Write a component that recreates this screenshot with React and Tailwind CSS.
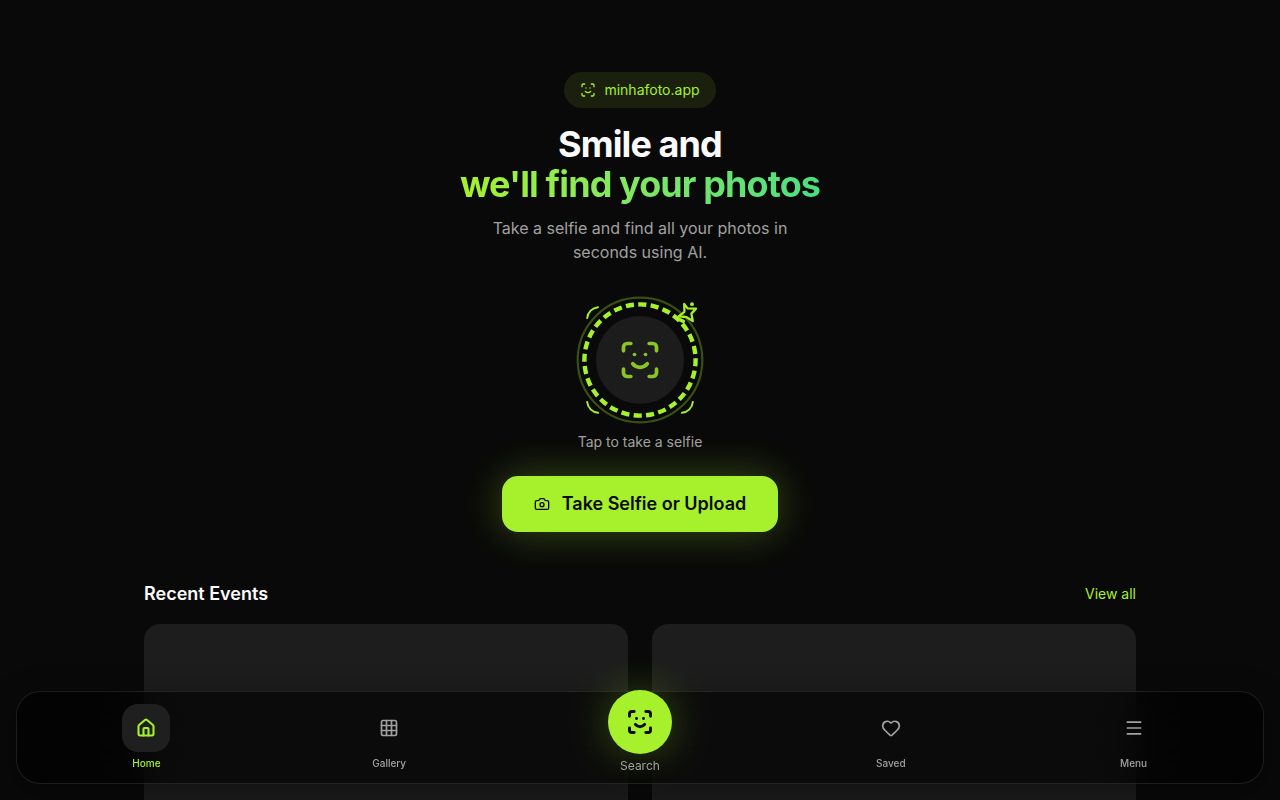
import React from "react";
import { Camera, Grid3x3, Heart, House, Menu, ScanFace } from "lucide-react";

const navItems = [
  { label: "Home", icon: House, active: true },
  { label: "Gallery", icon: Grid3x3 },
  { label: "Search", icon: ScanFace, main: true },
  { label: "Saved", icon: Heart },
  { label: "Menu", icon: Menu },
];

const events = [1, 2];

const SelfieButton = () => (
  <button
    type="button"
    aria-label="Take a selfie"
    className="relative flex size-32 items-center justify-center"
  >
    <svg
      viewBox="0 0 128 128"
      fill="none"
      stroke="#a6f02c"
      className="absolute inset-0 size-full"
    >
      <circle cx="64" cy="64" r="62.3" strokeWidth="2.2" strokeOpacity="0.3" />
      <circle
        cx="64"
        cy="64"
        r="55.6"
        strokeWidth="4.4"
        pathLength="336"
        strokeDasharray="7.8 4.2"
        transform="rotate(-91.8 64 64)"
      />
      <g strokeWidth="2" strokeLinecap="round" strokeLinejoin="round">
        <path d="M11.2 22A12 12 0 0 1 22 11.2" />
        <path d="M11.2 106A12 12 0 0 0 22 116.8" />
        <path d="M116.8 106A12 12 0 0 1 106 116.8" />
        {/* sparkle */}
        <path
          d="M108.2 8L111.6 12.4L120 12.6L115.4 17.6L116.8 25L110.6 21.2L102.6 20.4L108.4 15.8Z"
          strokeWidth="2.3"
        />
        <path d="M101.4 22.6L107.4 25.4" strokeWidth="3.4" />
      </g>
      <circle cx="116" cy="8.2" r="1.9" fill="#a6f02c" stroke="none" />
    </svg>
    <span className="flex size-22 items-center justify-center rounded-full bg-[#1c1c1c]">
      <ScanFace className="size-11 text-[#a6f02c] opacity-80" />
    </span>
  </button>
);

const Hero = () => (
  <section className="flex flex-col items-center px-4 pt-18 text-center">
    <div className="flex items-center gap-2 rounded-full bg-[#1a200d] px-4 py-2 text-sm text-[#a6f02c]">
      <ScanFace className="size-4" />
      <span>minhafoto.app</span>
    </div>
    <h1 className="mt-4 text-4xl font-bold tracking-tight text-[#fafafa]">
      Smile and
      <span className="block bg-linear-to-r from-[#a6f02c] to-[#4ade80] bg-clip-text text-transparent">
        we'll find your photos
      </span>
    </h1>
    <p className="mt-3 max-w-xs text-base text-[#a1a1a1]">
      Take a selfie and find all your photos in seconds using AI.
    </p>
    <div className="mt-8">
      <SelfieButton />
    </div>
    <p className="mt-2 text-sm text-[#a1a1a1]">Tap to take a selfie</p>
    <button
      type="button"
      className="mt-6 flex h-14 items-center gap-3 rounded-2xl bg-[#a6f02c] px-8 text-lg font-semibold text-[#0a0a0a] shadow-[0_0_40px_rgba(166,240,44,0.3)]"
    >
      <Camera className="size-4" />
      Take Selfie or Upload
    </button>
  </section>
);

const RecentEvents = () => (
  <section className="mx-auto mt-12 max-w-5xl px-4 pb-32">
    <div className="mb-4 flex items-center justify-between">
      <h2 className="text-lg font-semibold text-[#fafafa]">Recent Events</h2>
      <a href="#events" className="text-sm text-[#a6f02c]">
        View all
      </a>
    </div>
    <div className="grid grid-cols-2 gap-6">
      {events.map((id) => (
        <div key={id} className="aspect-video rounded-2xl bg-[#1d1d1d]" />
      ))}
    </div>
  </section>
);

const NavItem = ({ label, icon: Icon, active, main }) => {
  if (main) {
    return (
      <button
        type="button"
        className="-mt-3.5 -mb-1 flex flex-col items-center gap-1 text-xs text-[#a1a1a1]"
      >
        <span className="flex size-16 items-center justify-center rounded-full bg-[#a6f02c] text-[#0a0a0a] shadow-[0_0_40px_rgba(166,240,44,0.3)]">
          <Icon size={28} strokeWidth={2.5} />
        </span>
        {label}
      </button>
    );
  }

  return (
    <button
      type="button"
      className={`flex flex-col items-center gap-1 text-[10px] leading-[15px] font-medium ${
        active ? "text-[#a6f02c]" : "text-[#a1a1a1]"
      }`}
    >
      <span
        className={`flex size-12 items-center justify-center rounded-2xl ${
          active ? "bg-[#1f1f1f]" : ""
        }`}
      >
        <Icon size={20} strokeWidth={active ? 2.5 : 2} />
      </span>
      {label}
    </button>
  );
};

const BottomNav = () => (
  <nav className="fixed inset-x-4 bottom-4 flex items-start justify-around rounded-3xl border border-white/10 bg-black/60 px-2 py-3 shadow-[0_8px_32px_rgba(0,0,0,0.4)] backdrop-blur-xl">
    {navItems.map((item) => (
      <NavItem key={item.label} {...item} />
    ))}
  </nav>
);

const App = () => (
  <main className="min-h-screen bg-[#090909] font-['Inter',sans-serif]">
    <Hero />
    <RecentEvents />
    <BottomNav />
  </main>
);

export default App;
